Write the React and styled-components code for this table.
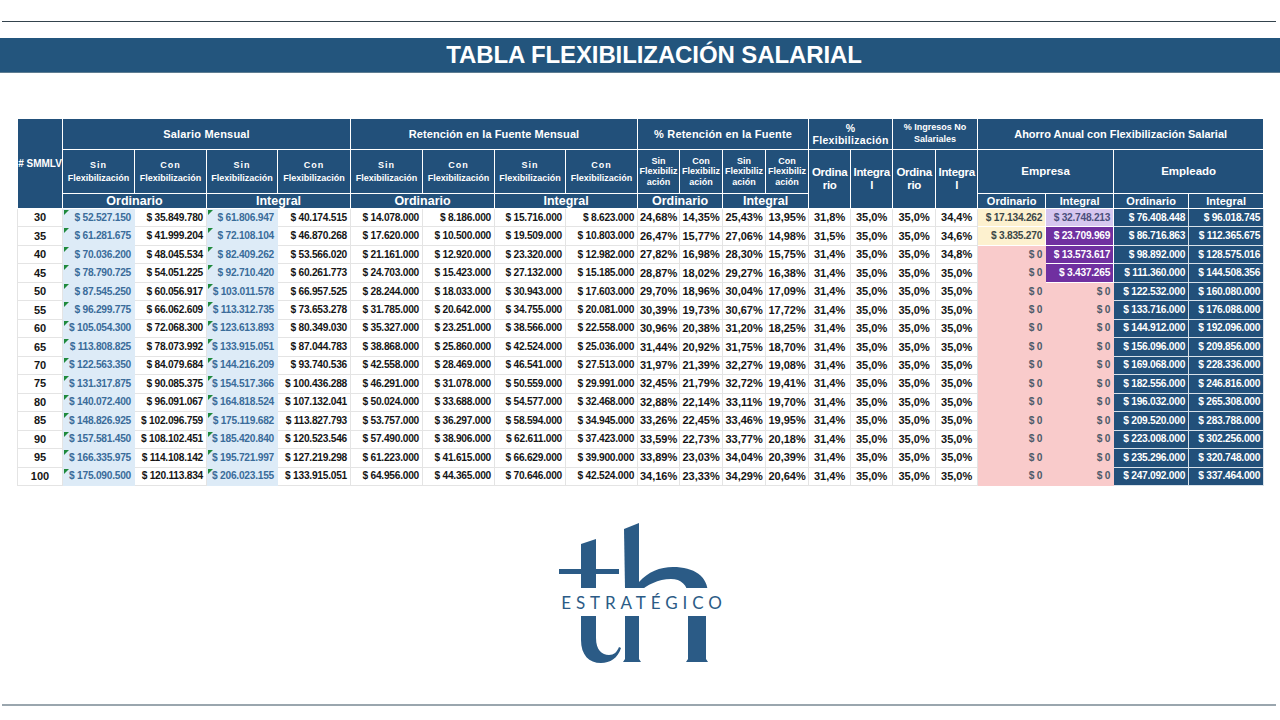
import React from 'react';
import styled, { createGlobalStyle } from 'styled-components';

const GlobalStyle = createGlobalStyle`
  html, body {
    margin: 0;
    padding: 0;
    background: #ffffff;
  }
  body {
    font-family: 'Liberation Sans', Arial, sans-serif;
  }
`;

const Page = styled.div`
  width: 1280px;
  height: 720px;
  overflow: hidden;
  background: #ffffff;
  display: flex;
  flex-direction: column;
  padding-top: 21px;
  box-sizing: border-box;
`;

const Rule = styled.div`
  height: ${p => p.$h}px;
  background: ${p => p.$color};
  margin: ${p => p.$top || 0}px 4px 0 2px;
  flex-shrink: 0;
`;

const TitleBar = styled.div`
  margin-top: 16px;
  height: 35px;
  box-sizing: border-box;
  background: #23557d;
  border-bottom: 1px solid #5e7d92;
  display: flex;
  align-items: center;
  justify-content: center;
  padding-left: 28px;
  flex-shrink: 0;
`;

const Title = styled.h1`
  margin: 0;
  color: #ffffff;
  font-size: 24px;
  font-weight: 700;
  letter-spacing: -0.1px;
`;

const TableWrap = styled.div`
  margin-top: 45px;
  padding-left: 17px;
  flex-shrink: 0;
`;

const Table = styled.table`
  border-collapse: collapse;
  table-layout: fixed;
  width: 1246px;
  font-family: 'Liberation Sans', Arial, sans-serif;
`;

const HeadRow = styled.tr`
  height: ${p => p.$h}px;
`;

const BodyRow = styled.tr`
  height: 18.47px;
`;

const Th = styled.th`
  background: #22507a;
  color: #ffffff;
  font-weight: 700;
  font-size: ${p => p.$fs || 11}px;
  line-height: ${p => p.$lh || 1.15};
  letter-spacing: ${p => p.$ls || 0}px;
  border: 1px solid #ffffff;
  padding: 0;
  text-align: center;
  vertical-align: middle;
  white-space: nowrap;
  overflow: hidden;
`;

const tones = {
  plain: { bg: '#ffffff', fg: '#151515', bd: '#e4e4e4' },
  sin: { bg: '#ddebf7', fg: '#3a6c9a', bd: '#ddebf7' },
  yellow: { bg: '#fdf1cf', fg: '#3b4747', bd: '#ffffff' },
  lavender: { bg: '#d6c7ef', fg: '#4b4f7c', bd: '#ffffff' },
  purple: { bg: '#7030a0', fg: '#ffffff', bd: '#ffffff' },
  pink: { bg: '#f9cbcb', fg: '#4e5b6a', bd: '#f9cbcb' },
  navy: { bg: '#22507a', fg: '#ffffff', bd: '#d9e2ea' },
};

const Td = styled.td`
  position: relative;
  background: ${p => tones[p.$tone || 'plain'].bg};
  color: ${p => tones[p.$tone || 'plain'].fg};
  border: 1px solid ${p => tones[p.$tone || 'plain'].bd};
  font-size: ${p => p.$fs || 10.2}px;
  font-weight: 700;
  letter-spacing: ${p => (p.$fs ? 0 : -0.25)}px;
  text-align: ${p => p.$align || 'right'};
  padding: 0 ${p => (p.$align === 'center' ? 0 : 3)}px 0 0;
  white-space: nowrap;
  overflow: hidden;
  line-height: 1;

  ${p => p.$flag && `
    &::before {
      content: '';
      position: absolute;
      top: 1px;
      left: 1px;
      border-top: 5px solid #1f8a3c;
      border-right: 5px solid transparent;
    }
  `}
`;

const LogoWrap = styled.div`
  margin-top: 30px;
  height: 150px;
  display: flex;
  justify-content: center;
  padding-left: 2px;
  flex-shrink: 0;
`;

const LogoText = styled.text`
  font-family: Lato, 'Open Sans', sans-serif;
  font-size: 17px;
  font-weight: 400;
  letter-spacing: 4.9px;
  fill: #2b5b86;
`;

const widths = [45, 72, 72, 71, 73, 72, 72, 71, 72, 42, 43, 43, 43, 42, 42, 43, 42, 68, 68, 75, 75];

const rows = [
  [30, '52.527.150', '35.849.780', '61.806.947', '40.174.515', '14.078.000', '8.186.000', '15.716.000', '8.623.000', '24,68%', '14,35%', '25,43%', '13,95%', '31,8%', '35,0%', '35,0%', '34,4%', '17.134.262', '32.748.213', '76.408.448', '96.018.745'],
  [35, '61.281.675', '41.999.204', '72.108.104', '46.870.268', '17.620.000', '10.500.000', '19.509.000', '10.803.000', '26,47%', '15,77%', '27,06%', '14,98%', '31,5%', '35,0%', '35,0%', '34,6%', '3.835.270', '23.709.969', '86.716.863', '112.365.675'],
  [40, '70.036.200', '48.045.534', '82.409.262', '53.566.020', '21.161.000', '12.920.000', '23.320.000', '12.982.000', '27,82%', '16,98%', '28,30%', '15,75%', '31,4%', '35,0%', '35,0%', '34,8%', '0', '13.573.617', '98.892.000', '128.575.016'],
  [45, '78.790.725', '54.051.225', '92.710.420', '60.261.773', '24.703.000', '15.423.000', '27.132.000', '15.185.000', '28,87%', '18,02%', '29,27%', '16,38%', '31,4%', '35,0%', '35,0%', '35,0%', '0', '3.437.265', '111.360.000', '144.508.356'],
  [50, '87.545.250', '60.056.917', '103.011.578', '66.957.525', '28.244.000', '18.033.000', '30.943.000', '17.603.000', '29,70%', '18,96%', '30,04%', '17,09%', '31,4%', '35,0%', '35,0%', '35,0%', '0', '0', '122.532.000', '160.080.000'],
  [55, '96.299.775', '66.062.609', '113.312.735', '73.653.278', '31.785.000', '20.642.000', '34.755.000', '20.081.000', '30,39%', '19,73%', '30,67%', '17,72%', '31,4%', '35,0%', '35,0%', '35,0%', '0', '0', '133.716.000', '176.088.000'],
  [60, '105.054.300', '72.068.300', '123.613.893', '80.349.030', '35.327.000', '23.251.000', '38.566.000', '22.558.000', '30,96%', '20,38%', '31,20%', '18,25%', '31,4%', '35,0%', '35,0%', '35,0%', '0', '0', '144.912.000', '192.096.000'],
  [65, '113.808.825', '78.073.992', '133.915.051', '87.044.783', '38.868.000', '25.860.000', '42.524.000', '25.036.000', '31,44%', '20,92%', '31,75%', '18,70%', '31,4%', '35,0%', '35,0%', '35,0%', '0', '0', '156.096.000', '209.856.000'],
  [70, '122.563.350', '84.079.684', '144.216.209', '93.740.536', '42.558.000', '28.469.000', '46.541.000', '27.513.000', '31,97%', '21,39%', '32,27%', '19,08%', '31,4%', '35,0%', '35,0%', '35,0%', '0', '0', '169.068.000', '228.336.000'],
  [75, '131.317.875', '90.085.375', '154.517.366', '100.436.288', '46.291.000', '31.078.000', '50.559.000', '29.991.000', '32,45%', '21,79%', '32,72%', '19,41%', '31,4%', '35,0%', '35,0%', '35,0%', '0', '0', '182.556.000', '246.816.000'],
  [80, '140.072.400', '96.091.067', '164.818.524', '107.132.041', '50.024.000', '33.688.000', '54.577.000', '32.468.000', '32,88%', '22,14%', '33,11%', '19,70%', '31,4%', '35,0%', '35,0%', '35,0%', '0', '0', '196.032.000', '265.308.000'],
  [85, '148.826.925', '102.096.759', '175.119.682', '113.827.793', '53.757.000', '36.297.000', '58.594.000', '34.945.000', '33,26%', '22,45%', '33,46%', '19,95%', '31,4%', '35,0%', '35,0%', '35,0%', '0', '0', '209.520.000', '283.788.000'],
  [90, '157.581.450', '108.102.451', '185.420.840', '120.523.546', '57.490.000', '38.906.000', '62.611.000', '37.423.000', '33,59%', '22,73%', '33,77%', '20,18%', '31,4%', '35,0%', '35,0%', '35,0%', '0', '0', '223.008.000', '302.256.000'],
  [95, '166.335.975', '114.108.142', '195.721.997', '127.219.298', '61.223.000', '41.615.000', '66.629.000', '39.900.000', '33,89%', '23,03%', '34,04%', '20,39%', '31,4%', '35,0%', '35,0%', '35,0%', '0', '0', '235.296.000', '320.748.000'],
  [100, '175.090.500', '120.113.834', '206.023.155', '133.915.051', '64.956.000', '44.365.000', '70.646.000', '42.524.000', '34,16%', '23,33%', '34,29%', '20,64%', '31,4%', '35,0%', '35,0%', '35,0%', '0', '0', '247.092.000', '337.464.000'],
];

const empresaTones = i => {
  if (i === 0) return ['yellow', 'lavender'];
  if (i === 1) return ['yellow', 'purple'];
  if (i < 4) return ['pink', 'purple'];
  return ['pink', 'pink'];
};

const money = v => `$ ${v}`;

const Logo = () => (
  <svg width="180" height="150" viewBox="0 0 180 150">
    <g fill="#2b5b86">
      {/* t */}
      <rect x="8" y="53" width="60" height="5" />
      <path d="M30,28 L45,23 L45,72 L30,72 Z" />
      <path d="M30,100 L45,100 L45,122 C45,134 51,139 58,139 C63,139 66,136 68,131 L70,132 C67,142 59,147 50,147 C38,147 30,139 30,124 Z" />
      {/* h */}
      <path d="M73,13 L88,7 L88,72 L74,72 Z" />
      <path d="M74,100 L88,100 L88,143 L90,146 L72,146 L74,143 Z" />
      <path d="M88,66 C97,56 109,51 122,51 C143,51 157,60 157,78 L157,90 L137,90 L137,80 C137,69 130,63 120,63 C107,63 96,69 88,76 Z" />
      <path d="M137,100 L155,100 L155,143 L157,146 L135,146 L137,143 Z" />
    </g>
    <rect x="0" y="72" width="180" height="28" fill="#ffffff" />
    <LogoText x="93" y="93" textAnchor="middle">ESTRATÉGICO</LogoText>
  </svg>
);

const SubHead = ({ label, narrow }) => (
  narrow ? (
    <Th $fs={9} $lh={1.12}>{label}<br />Flexibiliz<br />ación</Th>
  ) : (
    <Th $fs={9} $lh={1.35}><span style={{ letterSpacing: '1px' }}>{label}</span><br />Flexibilización</Th>
  )
);

export default function App() {
  return (
    <Page>
      <GlobalStyle />
      <Rule $h={1} $color="#34434d" />
      <TitleBar>
        <Title>TABLA FLEXIBILIZACIÓN SALARIAL</Title>
      </TitleBar>

      <TableWrap>
        <Table>
          <colgroup>
            {widths.map((w, i) => <col key={i} style={{ width: w }} />)}
          </colgroup>
          <thead>
            <HeadRow $h={31}>
              <Th rowSpan={3} $fs={10}># SMMLV</Th>
              <Th colSpan={4} $fs={11} $ls={0.2}>Salario Mensual</Th>
              <Th colSpan={4} $fs={11} $ls={0.1}>Retención en la Fuente Mensual</Th>
              <Th colSpan={4} $fs={11} $ls={0.2}>% Retención en la Fuente</Th>
              <Th colSpan={2} $fs={10.5} $ls={0.3}>%<br />Flexibilización</Th>
              <Th colSpan={2} $fs={9} $lh={1.3}>% Ingresos No<br />Salariales</Th>
              <Th colSpan={4} $fs={11}>Ahorro Anual con Flexibilización Salarial</Th>
            </HeadRow>
            <HeadRow $h={44}>
              <SubHead label="Sin" />
              <SubHead label="Con" />
              <SubHead label="Sin" />
              <SubHead label="Con" />
              <SubHead label="Sin" />
              <SubHead label="Con" />
              <SubHead label="Sin" />
              <SubHead label="Con" />
              <SubHead label="Sin" narrow />
              <SubHead label="Con" narrow />
              <SubHead label="Sin" narrow />
              <SubHead label="Con" narrow />
              <Th rowSpan={2} $fs={11.5} $ls={-0.3}>Ordina<br />rio</Th>
              <Th rowSpan={2} $fs={11.5} $ls={-0.3}>Integra<br />l</Th>
              <Th rowSpan={2} $fs={11.5} $ls={-0.3}>Ordina<br />rio</Th>
              <Th rowSpan={2} $fs={11.5} $ls={-0.3}>Integra<br />l</Th>
              <Th colSpan={2} $fs={11.5}>Empresa</Th>
              <Th colSpan={2} $fs={11.5}>Empleado</Th>
            </HeadRow>
            <HeadRow $h={15}>
              <Th colSpan={2} $fs={12.5} $lh={1}>Ordinario</Th>
              <Th colSpan={2} $fs={12.5} $lh={1}>Integral</Th>
              <Th colSpan={2} $fs={12.5} $lh={1}>Ordinario</Th>
              <Th colSpan={2} $fs={12.5} $lh={1}>Integral</Th>
              <Th colSpan={2} $fs={12.5} $lh={1}>Ordinario</Th>
              <Th colSpan={2} $fs={12.5} $lh={1}>Integral</Th>
              <Th $fs={11} $lh={1}>Ordinario</Th>
              <Th $fs={11} $lh={1}>Integral</Th>
              <Th $fs={11} $lh={1}>Ordinario</Th>
              <Th $fs={11} $lh={1}>Integral</Th>
            </HeadRow>
          </thead>
          <tbody>
            {rows.map((r, i) => {
              const [eo, ei] = empresaTones(i);
              return (
                <BodyRow key={r[0]}>
                  <Td $align="center" $fs={11}>{r[0]}</Td>
                  <Td $tone="sin" $flag>{money(r[1])}</Td>
                  <Td>{money(r[2])}</Td>
                  <Td $tone="sin" $flag>{money(r[3])}</Td>
                  <Td>{money(r[4])}</Td>
                  {r.slice(5, 9).map((v, k) => <Td key={`r${k}`}>{money(v)}</Td>)}
                  {r.slice(9, 17).map((v, k) => (
                    <Td key={`p${k}`} $align="center" $fs={11}>{v}</Td>
                  ))}
                  <Td $tone={eo}>{money(r[17])}</Td>
                  <Td $tone={ei}>{money(r[18])}</Td>
                  <Td $tone="navy">{money(r[19])}</Td>
                  <Td $tone="navy">{money(r[20])}</Td>
                </BodyRow>
              );
            })}
          </tbody>
        </Table>
      </TableWrap>

      <LogoWrap>
        <Logo />
      </LogoWrap>

      <Rule $h={2} $color="#9aa6ae" $top={38} />
    </Page>
  );
}
